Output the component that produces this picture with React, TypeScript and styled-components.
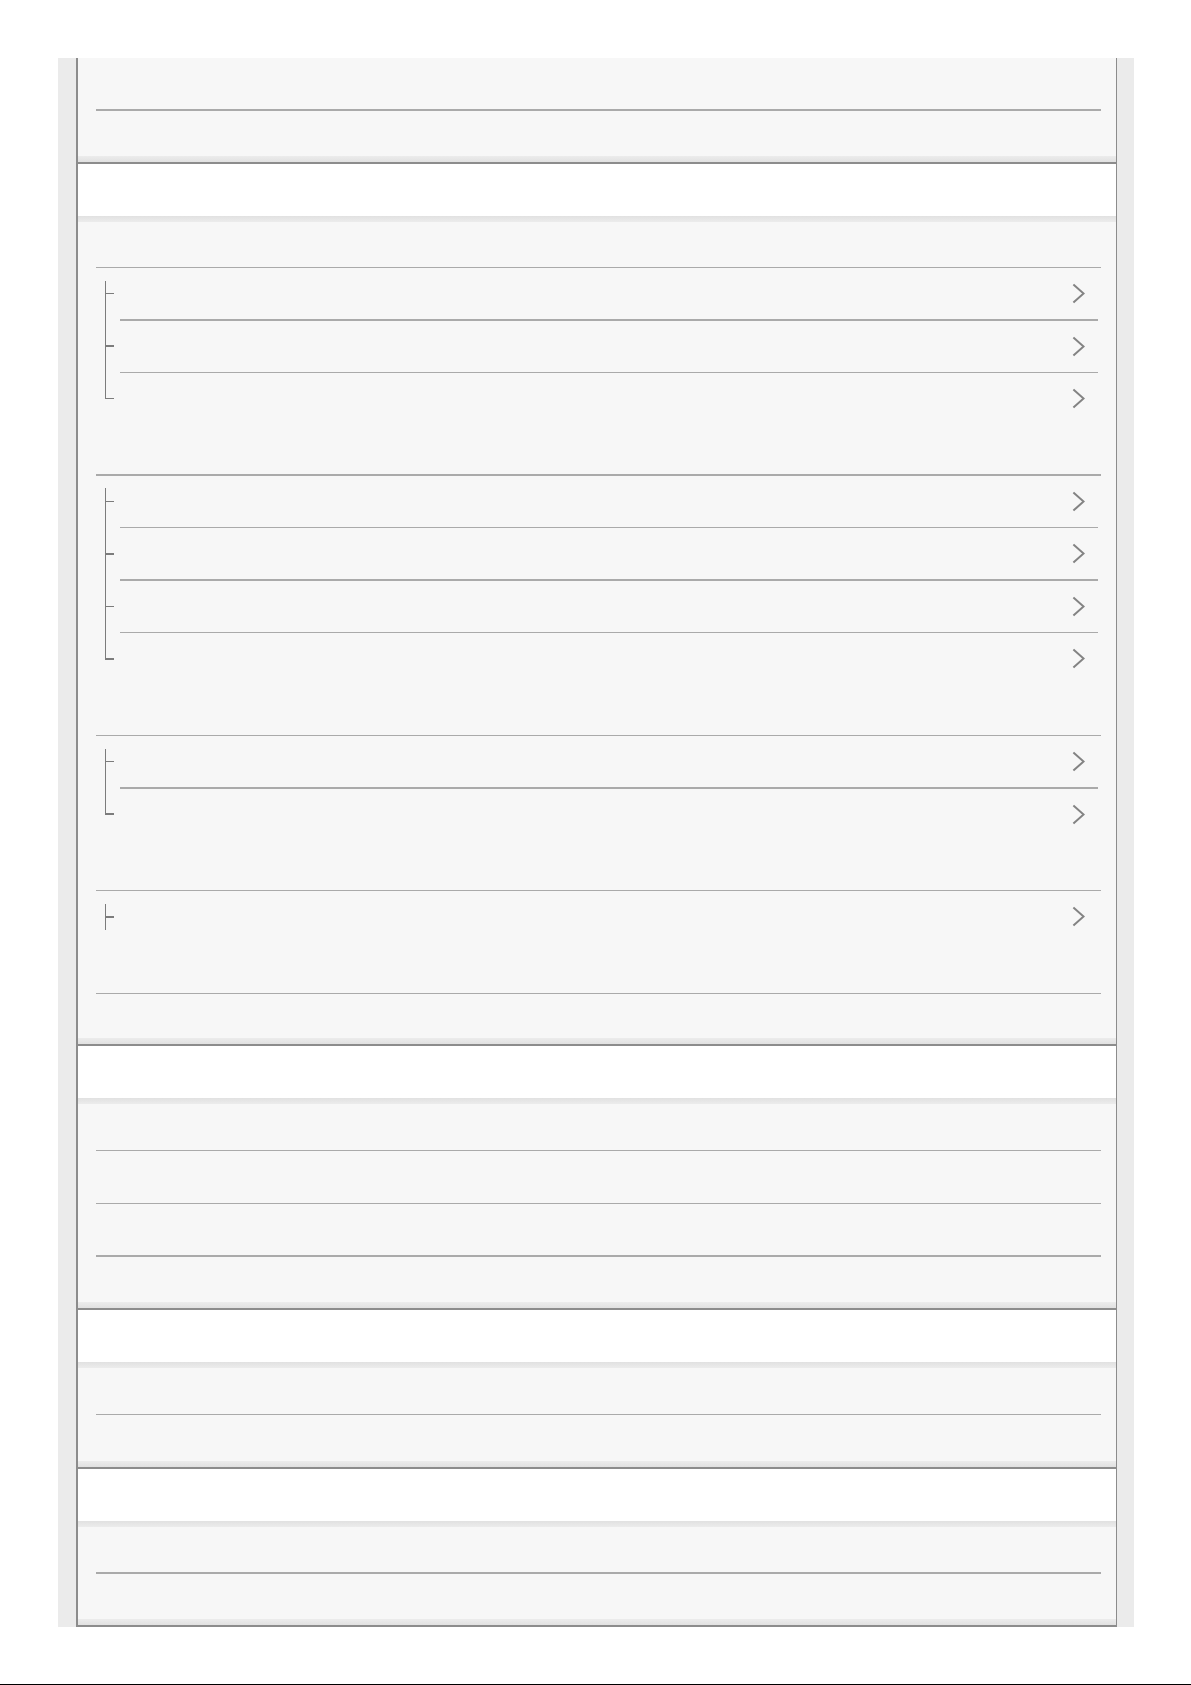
import React from 'react';
import styled, { createGlobalStyle } from 'styled-components';

const GlobalStyle = createGlobalStyle`
  html, body { margin: 0; padding: 0; background: #ffffff; }
  body { font-family: "Liberation Sans", Arial, sans-serif; color: #333; }
  *, *::before, *::after { box-sizing: border-box; }
`;

const Page = styled.div`
  width: 1191px;
  height: 1685px;
  display: flex;
  flex-direction: column;
  padding-top: 58px;
  background: #ffffff;
`;

const Gutter = styled.div`
  margin-left: 58px;
  width: 1076px;
  background: #ebebeb;
  padding: 0 17px 0 18px;
  flex: none;
`;

const Frame = styled.main`
  border-left: 2px solid #8c8c8c;
  border-right: 1px solid #8c8c8c;
  border-bottom: 2px solid #8c8c8c;
  display: flex;
  flex-direction: column;
`;

const SectionHeader = styled.header`
  height: 54px;
  border-top: 2px solid #8c8c8c;
  background: #ffffff;
  flex: none;
`;

const SectionBody = styled.section<{ $noTop?: boolean }>`
  display: flex;
  flex-direction: column;
  padding: 0 15px 0 18px;
  background: ${({ $noTop }) =>
    ($noTop ? '' : 'linear-gradient(to bottom, #e1e1e1, #ececec) top / 100% 6px no-repeat, ') +
    'linear-gradient(to top, #e1e1e1, #ececec) bottom / 100% 6px no-repeat, #f7f7f7'};
`;

const Row = styled.div`
  height: 51.4px;
  flex: none;
`;

const TitleRow = styled.div`
  height: 50.25px;
  flex: none;
`;

const Divider = styled.div`
  height: 1.5px;
  background: #aaaaaa;
  flex: none;
`;

const Tree = styled.ul`
  list-style: none;
  margin: 0;
  padding: 0;
  display: flex;
  flex-direction: column;
`;

const TreeItem = styled.li`
  display: flex;
  align-items: stretch;
`;

const Connector = styled.div`
  width: 24px;
  flex: none;
  padding-left: 9px;
  display: flex;
  flex-direction: column;
  align-items: flex-start;
`;

const Stem = styled.span<{ $from?: number; $len?: number; $fill?: boolean }>`
  display: block;
  width: 1px;
  background: #7c7c7c;
  margin-top: ${({ $from }) => $from ?? 0}px;
  height: ${({ $len }) => $len ?? 0}px;
  flex: ${({ $fill }) => ($fill ? '1 1 auto' : 'none')};
`;

const Tick = styled.span`
  display: block;
  width: 9px;
  height: 1.5px;
  background: #7c7c7c;
  flex: none;
`;

const ItemBody = styled.div`
  flex: 1;
  margin-right: 3px;
  display: flex;
  flex-direction: column;
`;

const ItemLink = styled.a`
  height: 51px;
  display: flex;
  align-items: center;
  justify-content: flex-end;
  padding-right: 13.5px;
  color: inherit;
  text-decoration: none;
  flex: none;
`;

const Spacer = styled.div`
  flex: 1;
`;

const BottomRule = styled.div`
  height: 1px;
  background: #000000;
  flex: none;
`;

const Chevron = () => (
  <svg width="13" height="21" viewBox="0 0 13 21" fill="none" aria-hidden="true">
    <polyline
      points="1.4,1.4 11.6,10.5 1.4,19.6"
      stroke="#838383"
      strokeWidth="2"
      strokeLinejoin="miter"
      strokeLinecap="butt"
    />
  </svg>
);

type Pos = 'first' | 'middle' | 'last' | 'only';

const TreeConnector = ({ pos }: { pos: Pos }) => {
  const upperFrom = pos === 'first' || pos === 'only' ? 12.5 : 0;
  const upperLen = 24.75 - upperFrom;
  return (
    <Connector>
      <Stem $from={upperFrom} $len={upperLen} />
      <Tick />
      {pos === 'only' && <Stem $len={12} />}
      {(pos === 'first' || pos === 'middle') && <Stem $fill />}
    </Connector>
  );
};

const TreeList = ({ count }: { count: number }) => (
  <Tree>
    {Array.from({ length: count }).map((_, i) => {
      const pos: Pos =
        count === 1 ? 'only' : i === 0 ? 'first' : i === count - 1 ? 'last' : 'middle';
      return (
        <TreeItem key={i}>
          <TreeConnector pos={pos} />
          <ItemBody>
            <ItemLink href="#">
              <Chevron />
            </ItemLink>
            {i < count - 1 && <Divider />}
          </ItemBody>
        </TreeItem>
      );
    })}
  </Tree>
);

const PlainRows = ({ count }: { count: number }) => (
  <>
    {Array.from({ length: count }).map((_, i) => (
      <React.Fragment key={i}>
        <Row />
        {i < count - 1 && <Divider />}
      </React.Fragment>
    ))}
  </>
);

const groups = [3, 4, 2, 1];

export default function App() {
  return (
    <>
      <GlobalStyle />
      <Page>
        <Gutter>
          <Frame>
            <SectionBody $noTop>
              <PlainRows count={2} />
            </SectionBody>

            <SectionHeader />
            <SectionBody>
              {groups.map((n, i) => (
                <React.Fragment key={i}>
                  <TitleRow />
                  <Divider />
                  <TreeList count={n} />
                </React.Fragment>
              ))}
              <TitleRow />
              <Divider />
              <TitleRow />
            </SectionBody>

            <SectionHeader />
            <SectionBody>
              <PlainRows count={4} />
            </SectionBody>

            <SectionHeader />
            <SectionBody>
              <PlainRows count={2} />
            </SectionBody>

            <SectionHeader />
            <SectionBody>
              <PlainRows count={2} />
            </SectionBody>
          </Frame>
        </Gutter>
        <Spacer />
        <BottomRule />
      </Page>
    </>
  );
}
